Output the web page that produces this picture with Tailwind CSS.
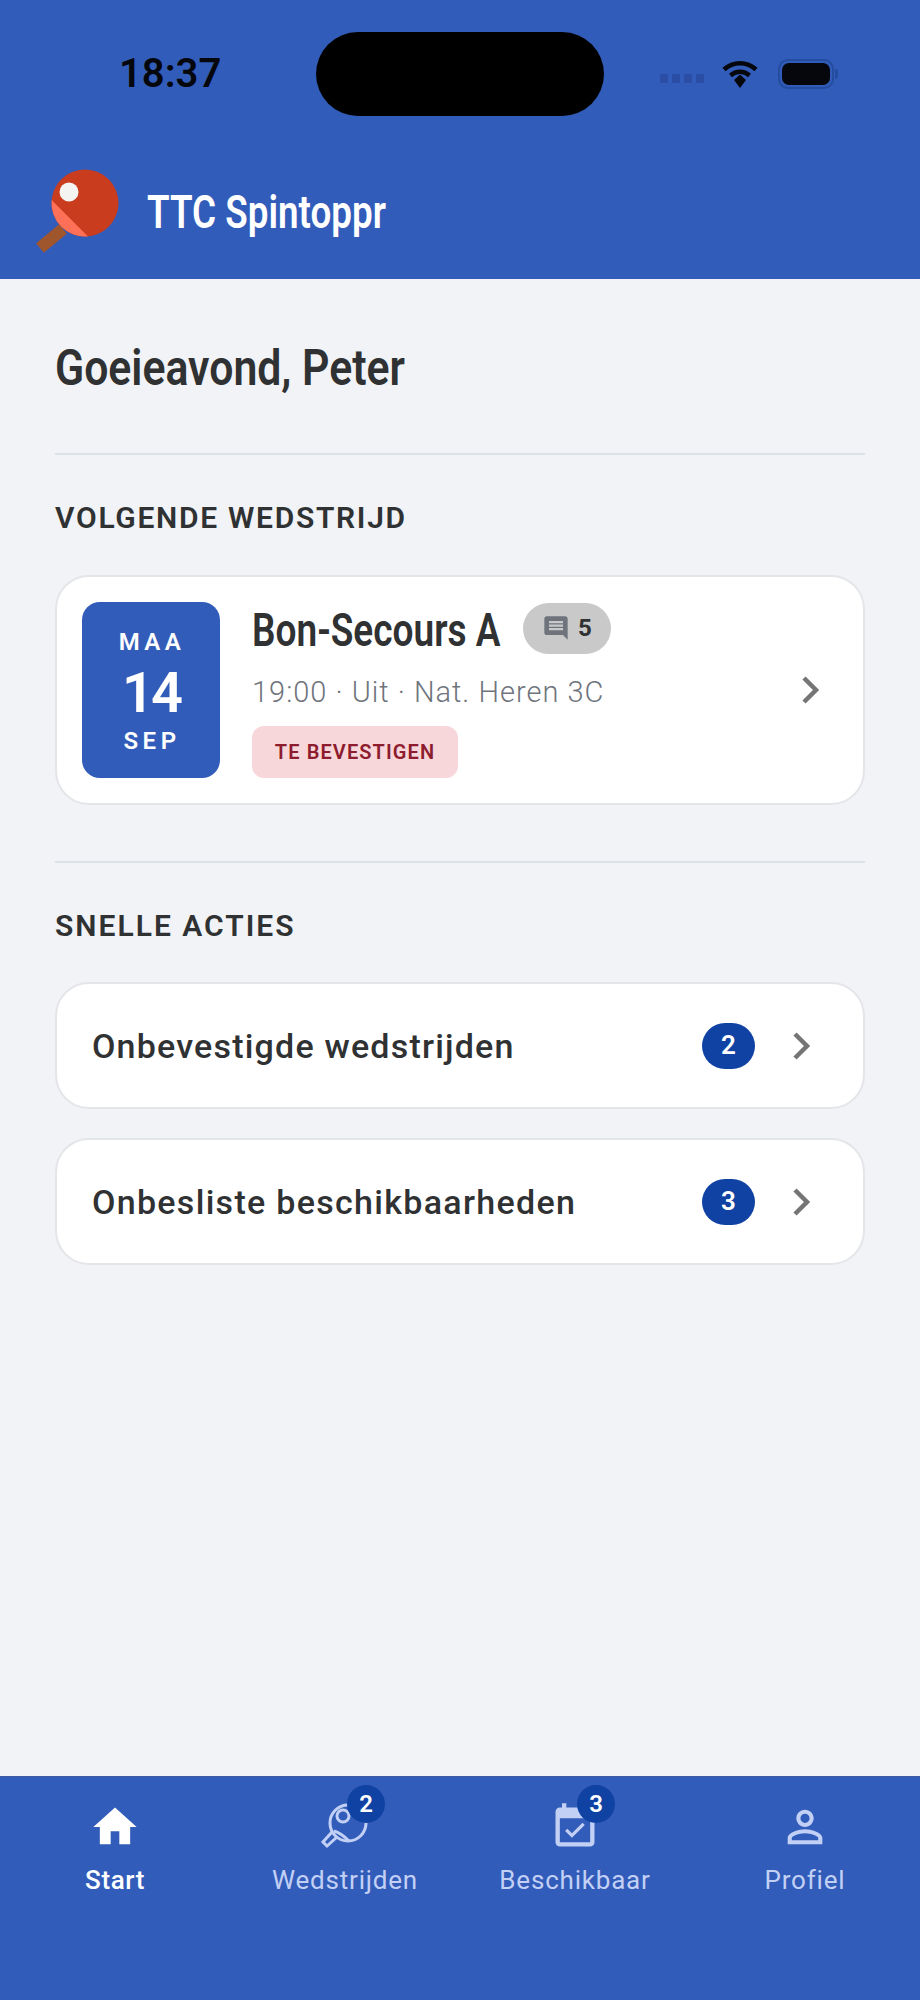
<!doctype html>
<html lang="nl">
<head>
<meta charset="utf-8">
<script src="https://cdn.jsdelivr.net/npm/@tailwindcss/browser@4"></script>
</head>
<body class="m-0">
<div class="w-[920px] h-[2000px] flex flex-col bg-[#f2f3f6] overflow-hidden font-['Roboto',sans-serif] text-[#2f3133]">
  <header class="bg-[#325cb9] h-[279px] shrink-0 pt-[32px]">
    <div class="flex items-center h-[84px]">
      <div class="w-[316px] pl-[119px] text-[40px] font-semibold text-[#05070c] font-['Roboto',sans-serif] leading-none">18:37</div>
      <div class="w-[288px] h-[84px] bg-black rounded-[42px]"></div>
      <div class="flex items-center pl-[56px]">
        <div class="flex gap-[4px] mt-[8px]">
          <span class="w-[8px] h-[9px] rounded-[1px] bg-[#2a4ea6]"></span><span class="w-[8px] h-[9px] rounded-[1px] bg-[#2a4ea6]"></span><span class="w-[8px] h-[9px] rounded-[1px] bg-[#2a4ea6]"></span><span class="w-[8px] h-[9px] rounded-[1px] bg-[#2a4ea6]"></span>
        </div>
        <svg class="ml-[17px]" width="38" height="30" viewBox="0 0 38 30"><path d="M3 10.500C12 2 26 2 35 10.500" fill="none" stroke="#05070c" stroke-width="4.500"/><path d="M9.500 16.500C15 11.500 23 11.500 28.500 16.500" fill="none" stroke="#05070c" stroke-width="4.500"/><path d="M13 21L19 15.500L25 21L19 29Z" fill="#05070c"/></svg>
        <div class="ml-[19px] w-[56px] h-[30px] rounded-[10px] border-2 border-[#244c9f] p-[2px]"><div class="w-full h-full rounded-[7px] bg-[#05070c]"></div></div>
        <span class="w-[3px] h-[10px] rounded-r-[3px] bg-[#244c9f] ml-[1px]"></span>
      </div>
    </div>
    <div class="flex items-center mt-[52px] pl-[35px]">
      <svg width="85" height="85" viewBox="0 0 85 85" class="shrink-0">
        <path d="M28 61L5 80" stroke="#a0562c" stroke-width="12" fill="none"/>
        <circle cx="50" cy="35" r="33.500" fill="#c93c1e"/>
        <path d="M16.600 32A33.500 33.500 0 0 0 53 68.400Z" fill="#ff7058"/>
        <circle cx="34" cy="24" r="9.500" fill="#f4f4f2"/>
      </svg>
      <div class="ml-[27px] w-[238px] whitespace-nowrap origin-left scale-x-[0.8] text-white text-[46px] font-semibold leading-none mt-[2px]">TTC Spintoppr</div>
    </div>
  </header>

  <main class="flex-1 px-[55px] pt-[64px]">
    <h1 class="w-[350px] whitespace-nowrap origin-left scale-x-[0.855] font-semibold text-[50px] leading-[50px] text-[#2f3133]">Goeieavond, Peter</h1>
    <div class="h-[2px] bg-[#dde2e7] mt-[60px]"></div>
    <h2 class="mt-[47px] text-[30px] leading-[32px] font-semibold tracking-[1.7px] text-[#2f3133]">VOLGENDE WEDSTRIJD</h2>
    <section class="mt-[41px] h-[230px] bg-white border-2 border-[#e4e5e8] rounded-[34px] flex items-center pl-[25px] pr-[42px]">
      <div class="w-[138px] h-[176px] shrink-0 bg-[#325cb9] rounded-[18px] flex flex-col items-center text-white pt-[26px]">
        <div class="text-[24px] leading-[28px] font-semibold tracking-[4.5px] pl-[2px]">MAA</div>
        <div class="text-[56px] leading-[60px] font-semibold tracking-[-3px] mt-[7px]">14</div>
        <div class="text-[24px] leading-[28px] font-semibold tracking-[4.5px] mt-[4px] pl-[2px]">SEP</div>
      </div>
      <div class="ml-[32px] flex-1 min-w-0">
        <div class="flex items-center h-[52px]">
          <div class="w-[248px] whitespace-nowrap origin-left scale-x-[0.805] font-semibold text-[46px] leading-none text-[#2f3133] mt-[4px]">Bon-Secours A</div>
          <div class="ml-[23px] w-[88px] h-[51px] rounded-full bg-[#c9c9c9] flex items-center justify-center gap-[8px]">
            <svg width="28" height="28" viewBox="0 0 24 24" fill="#6f747c"><path d="M21.990 4c0-1.100-.890-2-1.990-2H4c-1.100 0-2 .900-2 2v12c0 1.100.900 2 2 2h14l4 4-.010-18zM18 14H6v-2h12v2zm0-3H6V9h12v2zm0-3H6V6h12v2z"/></svg>
            <span class="text-[24px] font-bold leading-none text-[#2f3133]">5</span>
          </div>
        </div>
        <div class="mt-[20px] text-[29px] leading-[36px] font-light tracking-[1px] text-[#6f747c]">19:00 · Uit · Nat. Heren 3C</div>
        <div class="mt-[16px] flex items-center justify-center w-[206px] h-[52px] rounded-[12px] bg-[#f8d7da] text-[#8c1c2e] text-[20px] font-semibold tracking-[1.1px]">TE BEVESTIGEN</div>
      </div>
      <svg width="20" height="30" viewBox="0 0 20 30" class="shrink-0" fill="none" stroke="#757575" stroke-width="4.500"><path d="M3 3L15 15L3 27"/></svg>
    </section>
    <div class="h-[2px] bg-[#dde2e7] mt-[56px]"></div>
    <h2 class="mt-[47px] text-[30px] leading-[32px] font-semibold tracking-[2px] text-[#2f3133]">SNELLE ACTIES</h2>
    <div class="mt-[40px] flex flex-col gap-[29px]">
      <a class="h-[127px] bg-white border-2 border-[#e4e5e8] rounded-[34px] flex items-center pl-[35px] pr-[51px]">
        <span class="flex-1 text-[34px] font-medium tracking-[1.2px] text-[#2f3133] pt-[2px]">Onbevestigde wedstrijden</span>
        <span class="w-[53px] h-[46px] rounded-full bg-[#1042a3] text-white text-[26px] font-semibold flex items-center justify-center">2</span>
        <svg width="20" height="30" viewBox="0 0 20 30" class="ml-[37px] shrink-0" fill="none" stroke="#757575" stroke-width="4.500"><path d="M3 3L15 15L3 27"/></svg>
      </a>
      <a class="h-[127px] bg-white border-2 border-[#e4e5e8] rounded-[34px] flex items-center pl-[35px] pr-[51px]">
        <span class="flex-1 text-[34px] font-medium tracking-[1.3px] text-[#2f3133] pt-[2px]">Onbesliste beschikbaarheden</span>
        <span class="w-[53px] h-[46px] rounded-full bg-[#1042a3] text-white text-[26px] font-semibold flex items-center justify-center">3</span>
        <svg width="20" height="30" viewBox="0 0 20 30" class="ml-[37px] shrink-0" fill="none" stroke="#757575" stroke-width="4.500"><path d="M3 3L15 15L3 27"/></svg>
      </a>
    </div>
  </main>

  <nav class="bg-[#325cb9] h-[224px] shrink-0 grid grid-cols-4 pt-[24px] border-t border-[#3d5a9e]">
    <div class="flex flex-col items-center text-white">
      <svg width="52" height="52" viewBox="0 0 24 24" fill="currentColor"><path d="M10 20v-6h4v6h5v-8h3L12 3 2 12h3v8z"/></svg>
      <span class="mt-[11px] text-[26px] leading-[32px] font-medium tracking-[0.6px]">Start</span>
    </div>
    <div class="flex flex-col items-center text-[#c3d0f5]">
      <div class="relative w-[52px] h-[52px]">
        <svg width="52" height="52" viewBox="0 0 52 52" fill="none" stroke="currentColor" stroke-width="3"><circle cx="29" cy="22" r="18"/><circle cx="24" cy="15" r="6"/><path d="M13 31L4 41L8 45L18 36"/><path d="M15 30C22 32 28 38 30 40"/></svg>
        <span class="absolute left-[28px] -top-[16px] w-[38px] h-[38px] rounded-full bg-[#1042a3] text-white text-[24px] font-semibold flex items-center justify-center">2</span>
      </div>
      <span class="mt-[11px] text-[26px] leading-[32px] tracking-[0.8px]">Wedstrijden</span>
    </div>
    <div class="flex flex-col items-center text-[#c3d0f5]">
      <div class="relative w-[52px] h-[52px]">
        <svg width="52" height="52" viewBox="0 0 24 24" fill="currentColor"><path d="M16.530 11.060L15.470 10l-4.880 4.880-2.120-2.120-1.060 1.060L10.590 17l5.940-5.940zM19 3h-1V1h-2v2H8V1H6v2H5c-1.110 0-1.990.900-1.990 2L3 19c0 1.100.890 2 2 2h14c1.100 0 2-.900 2-2V5c0-1.100-.900-2-2-2zm0 16H5V8h14v11z"/></svg>
        <span class="absolute left-[28px] -top-[16px] w-[38px] h-[38px] rounded-full bg-[#1042a3] text-white text-[24px] font-semibold flex items-center justify-center">3</span>
      </div>
      <span class="mt-[11px] text-[26px] leading-[32px] tracking-[0.8px]">Beschikbaar</span>
    </div>
    <div class="flex flex-col items-center text-[#c3d0f5]">
      <svg width="52" height="52" viewBox="0 0 24 24" fill="currentColor"><path d="M12 5.900c1.160 0 2.100.940 2.100 2.100s-.940 2.100-2.100 2.100S9.900 9.160 9.900 8s.940-2.100 2.100-2.100m0 9c2.970 0 6.100 1.460 6.100 2.100v1.100H5.900V17c0-.640 3.130-2.100 6.100-2.100M12 4C9.790 4 8 5.790 8 8s1.790 4 4 4 4-1.790 4-4-1.790-4-4-4zm0 9c-2.670 0-8 1.340-8 4v3h16v-3c0-2.660-5.330-4-8-4z"/></svg>
      <span class="mt-[11px] text-[26px] leading-[32px] tracking-[0.8px]">Profiel</span>
    </div>
  </nav>
</div>
</body>
</html>
